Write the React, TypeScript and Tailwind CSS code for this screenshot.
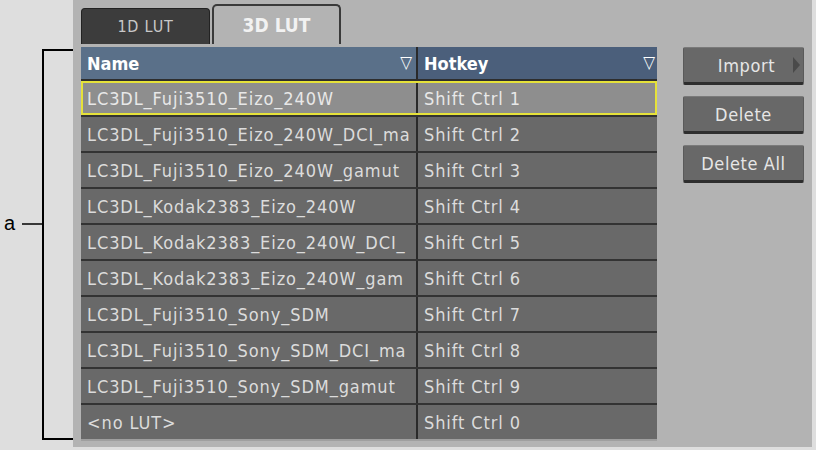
import React from "react";

const rows = [
  ["LC3DL_Fuji3510_Eizo_240W", "Shift Ctrl 1"],
  ["LC3DL_Fuji3510_Eizo_240W_DCI_ma", "Shift Ctrl 2"],
  ["LC3DL_Fuji3510_Eizo_240W_gamut", "Shift Ctrl 3"],
  ["LC3DL_Kodak2383_Eizo_240W", "Shift Ctrl 4"],
  ["LC3DL_Kodak2383_Eizo_240W_DCI_", "Shift Ctrl 5"],
  ["LC3DL_Kodak2383_Eizo_240W_gam", "Shift Ctrl 6"],
  ["LC3DL_Fuji3510_Sony_SDM", "Shift Ctrl 7"],
  ["LC3DL_Fuji3510_Sony_SDM_DCI_ma", "Shift Ctrl 8"],
  ["LC3DL_Fuji3510_Sony_SDM_gamut", "Shift Ctrl 9"],
  ["<no LUT>", "Shift Ctrl 0"],
];

const uiFont = { fontFamily: '"DejaVu Sans Condensed", "DejaVu Sans", sans-serif' };

function Button({ label, arrow }: { label: string; arrow?: boolean }) {
  return (
    <button className="relative w-[121px] h-[38px] bg-[#686868] border border-[#5a5a5a] border-t-[#7a7a7a] border-b-[3px] border-b-[#2e2e2e] rounded-[2px] text-[#e6e6e6] text-[18px] tracking-[0.6px] flex items-center justify-center">
      <span className={arrow ? "ml-[6px]" : ""}>{label}</span>
      {arrow && (
        <span className="absolute right-[3px] top-1/2 -translate-y-1/2 w-0 h-0 border-y-[8px] border-y-transparent border-l-[7px] border-l-[#4a4a4a]" />
      )}
    </button>
  );
}

export default function App() {
  return (
    <div className="w-[816px] h-[450px] bg-[#dedede] flex overflow-hidden" style={uiFont}>
      <svg width="73" height="450" className="shrink-0">
        <text x="4" y="230" fontSize="20" fontFamily="Liberation Sans, Arial, sans-serif" fill="#000">a</text>
        <line x1="22" y1="224" x2="43" y2="224" stroke="#000" strokeWidth="1.5" />
        <polyline points="76,50 43,50 43,439 76,439" fill="none" stroke="#000" strokeWidth="2" />
      </svg>

      <div className="w-[739px] h-[447px] bg-[#b3b3b3] pl-2 pt-[4px] flex flex-col">
        <div className="flex items-end gap-[2px] h-[40px]">
          <div className="w-[129px] h-[36px] bg-[#3c3c3c] border border-[#222] border-b-0 rounded-t-[4px] flex items-center justify-center text-[#c8c8c8] text-[16px] tracking-[0.8px]">
            1D LUT
          </div>
          <div className="w-[129px] h-[40px] bg-[#b3b3b3] border-2 border-[#3a3a3a] border-b-0 rounded-t-[5px] flex items-center justify-center text-[#f2f2f2] text-[19px] font-bold">
            3D LUT
          </div>
        </div>

        <div className="flex mt-[3px]">
          <div className="w-[576px] border-b-2 border-[#9f9f9f]">
            <div className="flex h-[32px] text-white text-[18px] font-bold">
              <div className="w-[335px] bg-[#5a7089] flex items-center justify-between pl-[6px] pr-[4px]">
                <span>Name</span>
                <span className="text-[17px]">▽</span>
              </div>
              <div className="w-[2px] bg-[#2a2a2a]" />
              <div className="flex-1 bg-[#4b5f7b] flex items-center justify-between pl-[6px] pr-[2px]">
                <span>Hotkey</span>
                <span className="text-[17px]">▽</span>
              </div>
            </div>
            {rows.map(([name, key], i) => {
              const sel = i === 0;
              return (
                <div
                  key={i}
                  className={
                    "relative flex h-[36px] text-[18px] tracking-[0.9px] border-t-2 " +
                    (sel ? "bg-[#8e8e8e] border-[#2e2e2e] text-[#e8e8e8]" : "bg-[#696969] border-[#333333] text-[#dcdcdc]")
                  }
                >
                  <div className="w-[335px] pl-[6px] flex items-center overflow-hidden whitespace-nowrap">{name}</div>
                  <div className="w-[2px] bg-[#2a2a2a]" />
                  <div className="flex-1 pl-[6px] flex items-center whitespace-nowrap">{key}</div>
                  {sel && <div className="absolute inset-0 border-2 border-[#e6e23a] pointer-events-none" />}
                </div>
              );
            })}
          </div>

          <div className="ml-[26px] flex flex-col gap-[11px]">
            <Button label="Import" arrow />
            <Button label="Delete" />
            <Button label="Delete All" />
          </div>
        </div>
      </div>
    </div>
  );
}
